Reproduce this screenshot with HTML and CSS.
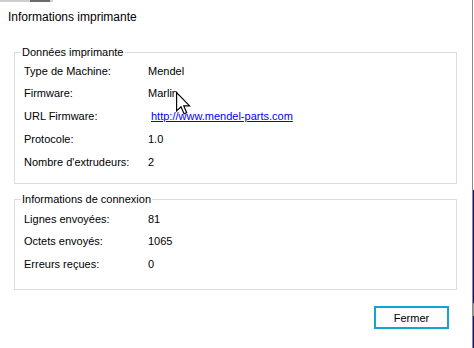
FILE: index.html
```html
<!DOCTYPE html>
<html lang="fr">
<head>
<meta charset="utf-8">
<title>Informations imprimante</title>
<link rel="stylesheet" href="styles.css">
</head>
<body>
<div class="screen">
  <div class="window">
    <div class="chrome"><span class="c1"></span><span class="c2"></span><span class="c3"></span></div>
    <div class="title">Informations imprimante</div>
    <fieldset class="group g1">
      <legend>Données imprimante</legend>
      <div class="rows rows1">
        <span class="lab">Type de Machine:</span><span class="val">Mendel</span>
        <span class="lab">Firmware:</span><span class="val">Marlin</span>
        <span class="lab">URL Firmware:</span><span class="val"><a class="link" href="#">http://www.mendel-parts.com</a></span>
        <span class="lab">Protocole:</span><span class="val">1.0</span>
        <span class="lab">Nombre d'extrudeurs:</span><span class="val">2</span>
      </div>
    </fieldset>
    <fieldset class="group g2">
      <legend>Informations de connexion</legend>
      <div class="rows rows2">
        <span class="lab">Lignes envoyées:</span><span class="val">81</span>
        <span class="lab">Octets envoyés:</span><span class="val">1065</span>
        <span class="lab">Erreurs reçues:</span><span class="val">0</span>
      </div>
    </fieldset>
    <div class="actions"><button class="btn">Fermer</button></div>
    <svg class="cursor" width="15" height="23" viewBox="0 0 13 20"><path d="M0.5 0.5 L0.5 16.5 L4.3 12.8 L7 19 L9.3 18 L6.7 12 L11.8 12 Z" fill="#fff" stroke="#000" stroke-width="1"/></svg>
  </div>
  <div class="desk"></div>
</div>
</body>
</html>
```
FILE: styles.css
```css
html, body {
  margin: 0;
  padding: 0;
  background: #fff;
}
body {
  font-family: "Liberation Sans", Arial, sans-serif;
  font-size: 11px;
  color: #000;
}
.screen {
  display: flex;
  width: 474px;
  height: 348px;
  overflow: hidden;
}
.window {
  position: relative;
  width: 472px;
  height: 348px;
  border-right: 1px solid #8a8a8a;
  background: #fff;
  box-sizing: content-box;
}
.desk {
  width: 1px;
  height: 348px;
  background: linear-gradient(#fff 0, #fff 190px, #0c0f7a 190px, #0c0f7a 303px, #9a9a9a 303px, #9a9a9a 316px, #0c0f7a 316px);
}
.chrome {
  display: flex;
  height: 2px;
}
.chrome .c1 { width: 30px; background: #cfcfcf; }
.chrome .c2 { width: 20px; background: #6b6b6b; }
.chrome .c3 { width: 3px; background: #cfcfcf; }
.title {
  font-size: 12px;
  line-height: 14px;
  padding: 8px 8px 0;
  height: 36px;
}
.group {
  margin: 0 15px 0 14px;
  padding: 2px 0 9px 0;
  border: 1px solid #dcdcdc;
  min-width: 0;
}
.group legend {
  margin-left: 6px;
  padding: 0 1px;
  line-height: 13px;
  font-size: 11px;
}
.g2 {
  margin-top: 9px;
  padding-bottom: 14px;
}
.rows {
  display: grid;
  grid-template-columns: 124px 1fr;
  align-items: center;
  padding-left: 9px;
}
.rows1 {
  grid-template-rows: 21px 23px 23px 23px 23px;
}
.rows2 {
  grid-template-rows: 22px 23px 22px;
}
.lab, .val {
  line-height: 13px;
}
.link {
  color: #0000ff;
  text-decoration: underline;
  margin-left: 3px;
}
.actions {
  display: flex;
  justify-content: flex-end;
  padding: 16px 23px 0 0;
}
.btn {
  width: 75px;
  height: 23px;
  box-sizing: border-box;
  border: 2px solid #17a0d3;
  background: #fdfdfd;
  font-family: "Liberation Sans", Arial, sans-serif;
  font-size: 11px;
  color: #000;
  padding: 0;
}
.cursor {
  position: absolute;
  left: 176px;
  top: 92px;
}
```
